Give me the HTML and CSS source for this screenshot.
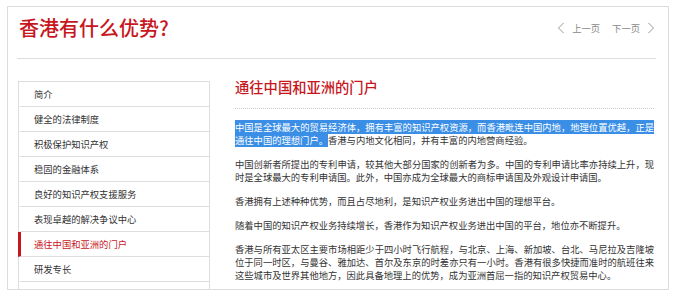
FILE: index.html
```html
<!DOCTYPE html>
<html>
<head>
    <meta charset="utf-8">
    <title>香港有什么优势？</title>
    <link rel="stylesheet" href="styles.css">
</head>
<body>
    <div class="frame">
        <div class="header">
            <h1 class="title">香港有什么优势?</h1>
            <div class="pager">
                <a href="#" class="pager-link">
                    <svg class="chevron" width="8" height="12" viewBox="0 0 8 12"><path d="M6.5 1 L1.5 6 L6.5 11" fill="none" stroke="#9a9a9a" stroke-width="1"/></svg>
                    上一页
                </a>
                <a href="#" class="pager-link">
                    下一页
                    <svg class="chevron" width="8" height="12" viewBox="0 0 8 12"><path d="M1.5 1 L6.5 6 L1.5 11" fill="none" stroke="#9a9a9a" stroke-width="1"/></svg>
                </a>
            </div>
        </div>

        <div class="main">
            <!-- left menu -->
            <ul class="menu">
                <li class="menu-item">简介</li>
                <li class="menu-item">健全的法律制度</li>
                <li class="menu-item">积极保护知识产权</li>
                <li class="menu-item">稳固的金融体系</li>
                <li class="menu-item">良好的知识产权支援服务</li>
                <li class="menu-item">表现卓越的解决争议中心</li>
                <li class="menu-item active">通往中国和亚洲的门户</li>
                <li class="menu-item">研发专长</li>
                <li class="menu-item">&nbsp;</li>
            </ul>

            <div class="content">
                <h2 class="content-title">通往中国和亚洲的门户</h2>
                <p><span class="selected">中国是全球最大的贸易经济体，拥有丰富的知识产权资源，而香港毗连中国内地，地理位置优越，正是通往中国的理想门户。</span>香港与内地文化相同，并有丰富的内地营商经验。</p>
                <p>中国创新者所提出的专利申请，较其他大部分国家的创新者为多。中国的专利申请比率亦持续上升，现时是全球最大的专利申请国。此外，中国亦成为全球最大的商标申请国及外观设计申请国。</p>
                <p>香港拥有上述种种优势，而且占尽地利，是知识产权业务进出中国的理想平台。</p>
                <p>随着中国的知识产权业务持续增长，香港作为知识产权业务进出中国的平台，地位亦不断提升。</p>
                <p>香港与所有亚太区主要市场相距少于四小时飞行航程，与北京、上海、新加坡、台北、马尼拉及吉隆坡位于同一时区，与曼谷、雅加达、首尔及东京的时差亦只有一小时。香港有很多快捷而准时的航班往来这些城市及世界其他地方，因此具备地理上的优势，成为亚洲首屈一指的知识产权贸易中心。</p>
            </div>
        </div>
    </div>
</body>
</html>
```

FILE: styles.css
```css
body{
    margin: 0;
    background: #fff;
    font-family: "Noto Sans CJK SC", "Liberation Sans", sans-serif;
    color: #333;
}
.frame{
    margin: 6px 0 0 7px;
    width: 660px;
    height: 282px;
    border: 1px solid #dcdcdc;
    overflow: hidden;
}
.header{
    display: flex;
    justify-content: space-between;
    align-items: flex-start;
    height: 44px;
    padding-top: 7px;
    margin: 0 12px 0 9px;
    border-bottom: 1px solid #ddd;
}
.title{
    margin: 0 0 0 2px;
    font-size: 20px;
    line-height: 28px;
    font-weight: 500;
    color: #c8161e;
}
.pager{
    display: flex;
    gap: 12px;
    margin-right: 1px;
    line-height: 28px;
}
.pager-link{
    display: flex;
    align-items: center;
    gap: 7px;
    font-size: 9.3px;
    color: #888;
    text-decoration: none;
}
.chevron{
    display: block;
}
.main{
    display: flex;
    align-items: flex-start;
    padding-top: 22px;
}
.menu{
    list-style: none;
    margin: 0 0 0 10px;
    padding: 0;
    width: 190px;
    border: 1px solid #ddd;
    border-bottom: none;
}
.menu-item{
    height: 24px;
    line-height: 24px;
    padding-left: 13px;
    font-size: 9.3px;
    color: #333;
    border-bottom: 1px solid #ddd;
    border-left: 3px solid transparent;
    margin-left: -1px;
}
.menu-item.active{
    border-left-color: #c8161e;
    color: #c8161e;
}
.content{
    width: 419px;
    margin-left: 25px;
}
.content-title{
    margin: -4px 0 0;
    padding-bottom: 11px;
    font-size: 14.3px;
    line-height: 20px;
    font-weight: 500;
    color: #c8161e;
    border-bottom: 1px dotted #ccc;
}
.content p{
    margin: 11px 0 0;
    font-size: 9.3px;
    line-height: 13px;
    color: #333;
    text-align: justify;
}
.content p:first-of-type{
    margin-top: 12px;
}
.selected{
    background: #3a8ee6;
    color: #fff;
}
```
